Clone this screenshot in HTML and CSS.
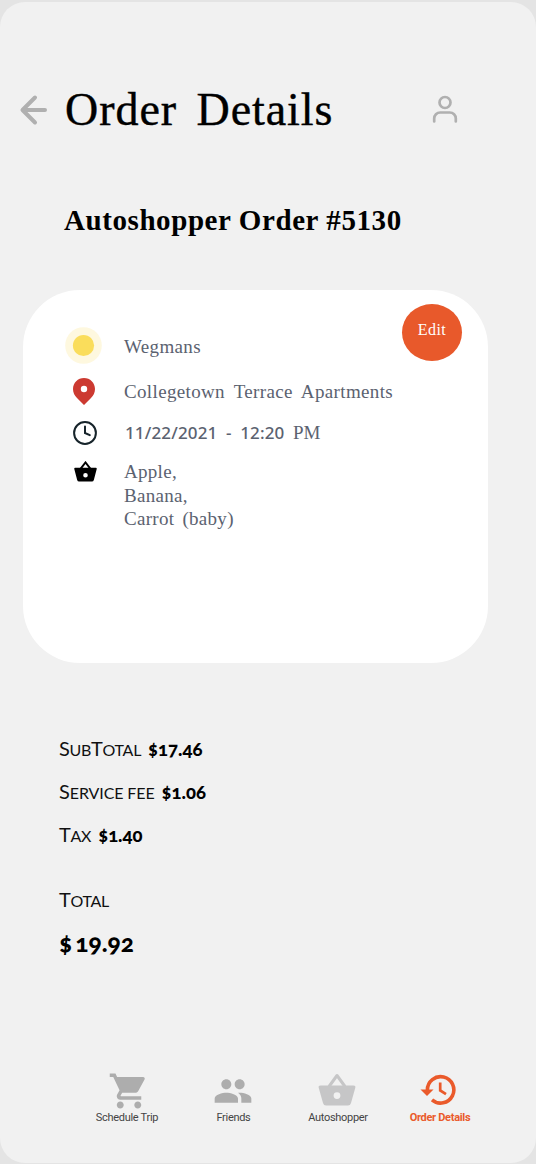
FILE: index.html
```html
<!DOCTYPE html>
<html lang="en">
<head>
<meta charset="utf-8">
<title>Order Details</title>
<link rel="stylesheet" href="styles.css">
</head>
<body>
<main class="screen">
  <header class="header">
    <svg class="back" viewBox="0 0 28 32"><path d="M26 16H4M16 3.500L3.500 16l12.500 12.500"/></svg>
    <h1 class="title">Order Details</h1>
    <svg class="user" viewBox="0 0 26 28"><circle cx="13" cy="7.500" r="5.500"/><path d="M2.200 26.500v-3a6 6 0 0 1 6-6h9.600a6 6 0 0 1 6 6v3"/></svg>
  </header>
  <h2 class="order">Autoshopper Order #5130</h2>
  <section class="card">
    <div class="row store">
      <svg class="dot" viewBox="0 0 37 37"><circle cx="18.500" cy="18.500" r="18.300" fill="#fef8df"/><circle cx="18.500" cy="18.500" r="10.600" fill="#fadd5b"/></svg>
      <span class="store-name">Wegmans</span>
    </div>
    <div class="row place">
      <svg class="pin" viewBox="0 0 22 27"><path fill-rule="evenodd" fill="#cc3a31" d="M11 0C4.900 0 0 4.900 0 11c0 3.600 1.500 6.500 4 9l7 7 7-7c2.500-2.500 4-5.400 4-9C22 4.900 17.100 0 11 0Zm0 7.800a3.200 3.200 0 1 1 0 6.400 3.200 3.200 0 0 1 0-6.400Z"/></svg>
      <span class="place-name">Collegetown Terrace Apartments</span>
    </div>
    <div class="row time">
      <svg class="clock" viewBox="0 0 24 24"><circle cx="12" cy="12" r="10.900"/><path d="M12 5.500V12l4.800 2.200"/></svg>
      <span class="when">11/22/2021 - 12:20 <span class="pm">PM</span></span>
    </div>
    <div class="row items">
      <svg class="basket" viewBox="0 0 24 22"><path d="m7 7.500 5-6.500 5 6.500" fill="none" stroke="#000" stroke-width="2"/><path fill-rule="evenodd" d="M1.300 6.500h21.400q1.300 0 1 1.300l-3 11.500q-.5 1.700-2 1.700H5.300q-1.500 0-2-1.700l-3-11.500q-.3-1.300 1-1.300ZM12 12a2.400 2.400 0 1 0 0 4.800 2.400 2.400 0 0 0 0-4.800Z"/></svg>
      <span class="list">Apple,<br>Banana,<br>Carrot (baby)</span>
    </div>
    <button class="edit">Edit</button>
  </section>
  <section class="costs">
    <p class="cost"><span class="label sub">S<small>ub</small>T<small>otal</small></span> <b>$17.46</b></p>
    <p class="cost"><span class="label fee">S<small>ervice fee</small></span> <b>$1.06</b></p>
    <p class="cost"><span class="label tax">T<small>ax</small></span> <b>$1.40</b></p>
    <p class="cost total"><span class="label tot">T<small>otal</small></span></p>
    <p class="amount"><span class="currency">$</span>19.92</p>
  </section>
  <nav class="nav">
    <a class="tab trip"><svg viewBox="0 0 24 24"><path d="M7 18c-1.100 0-1.990.9-1.990 2S5.900 22 7 22s2-.9 2-2-.9-2-2-2zM1 2v2h2l3.600 7.590-1.350 2.450c-.16.280-.25.610-.25.960 0 1.100.9 2 2 2h12v-2H7.420c-.14 0-.25-.11-.25-.25l.03-.12.9-1.630h7.450c.75 0 1.410-.41 1.750-1.030l3.580-6.490A1 1 0 0 0 20 4H5.210l-.94-2H1zm16 16c-1.100 0-1.990.9-1.990 2s.89 2 1.990 2 2-.9 2-2-.9-2-2-2z"/></svg><span>Schedule Trip</span></a>
    <a class="tab friends"><svg viewBox="0 0 24 24"><path d="M16 11c1.660 0 2.990-1.340 2.990-3S17.660 5 16 5s-3 1.340-3 3 1.340 3 3 3zm-8 0c1.660 0 2.990-1.340 2.990-3S9.660 5 8 5 5 6.340 5 8s1.340 3 3 3zm0 2c-2.330 0-7 1.170-7 3.500V19h14v-2.500c0-2.330-4.670-3.500-7-3.500zm8 0c-.29 0-.62.020-.97.050 1.160.84 1.970 1.970 1.970 3.450V19h6v-2.500c0-2.330-4.670-3.500-7-3.500z"/></svg><span>Friends</span></a>
    <a class="tab auto"><svg viewBox="0 0 38 34"><path d="m11 13.500 8-11 8 11" fill="none" stroke="#c6c6c7" stroke-width="3" stroke-linejoin="round"/><path fill-rule="evenodd" d="M2.500 12.500h33q2.300 0 1.800 2.200L33 30q-.7 2.500-3 2.500H8q-2.300 0-3-2.500L.7 14.700q-.5-2.200 1.800-2.200ZM19 19.200a3.400 3.400 0 1 0 0 6.800 3.400 3.400 0 0 0 0-6.800Z"/></svg><span>Autoshopper</span></a>
    <a class="tab active"><svg viewBox="0 0 36 32"><path d="M7.400 16A13.200 13.200 0 1 1 12 25.900" fill="none" stroke="#ea5a2b" stroke-width="3.600"/><path d="M.5 15.500h13L7 22Z"/><path d="M20.200 8.500v8l5.800 3.700" fill="none" stroke="#ea5a2b" stroke-width="2.700"/></svg><span>Order Details</span></a>
  </nav>
</main>
</body>
</html>
```

FILE: styles.css
```css
* { box-sizing: border-box; }
body { margin: 0; background: #e4e4e4; }
svg { display: block; flex: none; }
h1, h2, p { margin: 0; }
.screen { display: flow-root; width: 536px; height: 1161px; margin-top: 2px; border-radius: 25px; background: #f1f1f1; overflow: hidden; font-family: "Liberation Serif", serif; }
.header { display: flex; align-items: center; height: 60px; margin-top: 78px; padding-left: 19px; }
.back { width: 28px; height: 32px; fill: none; stroke: #b0b0b0; stroke-width: 4; stroke-linecap: round; stroke-linejoin: round; }
.title { width: 300px; margin-left: 18px; font-size: 46px; line-height: 60px; font-weight: 400; letter-spacing: .95px; word-spacing: 7px; white-space: nowrap; color: #000; -webkit-text-stroke: .4px #000; }
.user { width: 26px; height: 28px; margin: -2px 0 0 67px; fill: none; stroke: #b0b0b0; stroke-width: 2.700; stroke-linecap: round; }
.order { margin: 60px 0 0 64px; height: 40px; font-size: 29px; line-height: 40px; font-weight: 700; letter-spacing: .58px; white-space: nowrap; }
.card { position: relative; width: 465px; height: 373px; margin: 50px 0 0 23px; padding-top: 37px; border-radius: 57px; background: #fff; color: #5b6270; font-size: 19px; }
.row { display: flex; align-items: center; white-space: nowrap; }
.store { height: 37px; padding-left: 42px; }
.dot { width: 37px; height: 37px; }
.store-name { margin: 2px 0 0 22px; letter-spacing: .35px; }
.place { height: 27px; margin-top: 14px; padding-left: 50px; }
.pin { width: 22px; height: 27px; }
.place-name { margin-left: 29px; letter-spacing: .35px; word-spacing: 4px; }
.time { height: 24px; margin-top: 16px; padding-left: 50px; }
.clock { width: 24px; height: 24px; fill: none; stroke: #17242b; stroke-width: 2; stroke-linecap: round; }
.when { margin: -1px 0 0 28px; font: 500 17px "Noto Sans", sans-serif; letter-spacing: .15px; word-spacing: 4px; }
.pm { font: 19px "Liberation Serif", serif; letter-spacing: 0; }
.items { align-items: flex-start; margin-top: 16px; padding-left: 51px; }
.basket { width: 23px; height: 22px; }
.list { margin: -1px 0 0 27px; line-height: 23.500px; letter-spacing: .3px; word-spacing: 3px; }
.edit { position: absolute; left: 379px; top: 14px; width: 60px; height: 57px; padding: 0 0 5px; border: 0; border-radius: 50%; background: #e8592b; color: #fff; font: 16px "Liberation Serif", serif; letter-spacing: .4px; }
.costs { margin: 70px 0 0 59px; font-family: Lato, sans-serif; color: #111; }
.cost { display: flex; align-items: baseline; height: 43px; font-size: 20px; line-height: 30px; white-space: nowrap; }
.label { font-weight: 400; letter-spacing: -.3px; }
.cost small { font-size: 16px; text-transform: uppercase; }
.label.fee { letter-spacing: -.1px; }
.cost b { margin-left: 7px; font-size: 18.500px; font-weight: 900; font-feature-settings: "onum"; color: #000; }
.total { margin-top: 22px; }
.amount { font-size: 24.500px; line-height: 30px; margin-top: 1px; font-weight: 900; font-feature-settings: "onum"; color: #000; }
.currency { margin-right: 3px; }
.nav { display: flex; margin: 114px 0 0 87px; font: 11px/14px Roboto, sans-serif; letter-spacing: -.3px; color: #444; }
.tab { display: flex; flex-direction: column; align-items: center; height: 53px; white-space: nowrap; }
.tab svg { fill: #adadad; }
.tab span { margin-top: auto; }
.trip { width: 80px; }
.trip svg { width: 42px; height: 42px; margin: -2px 0 -3px 4px; }
.friends { width: 133px; }
.friends svg { width: 40px; height: 40px; margin: -1px 2px 0 0; }
.auto { width: 76px; }
.auto svg { width: 38px; height: 34px; margin: 1px 2px 0 0; fill: #c6c6c7; }
.active { width: 128px; color: #ea5a2b; font-weight: 700; }
.active svg { width: 36px; height: 32px; margin: 2px 4px 0 0; fill: #ea5a2b; }
```
